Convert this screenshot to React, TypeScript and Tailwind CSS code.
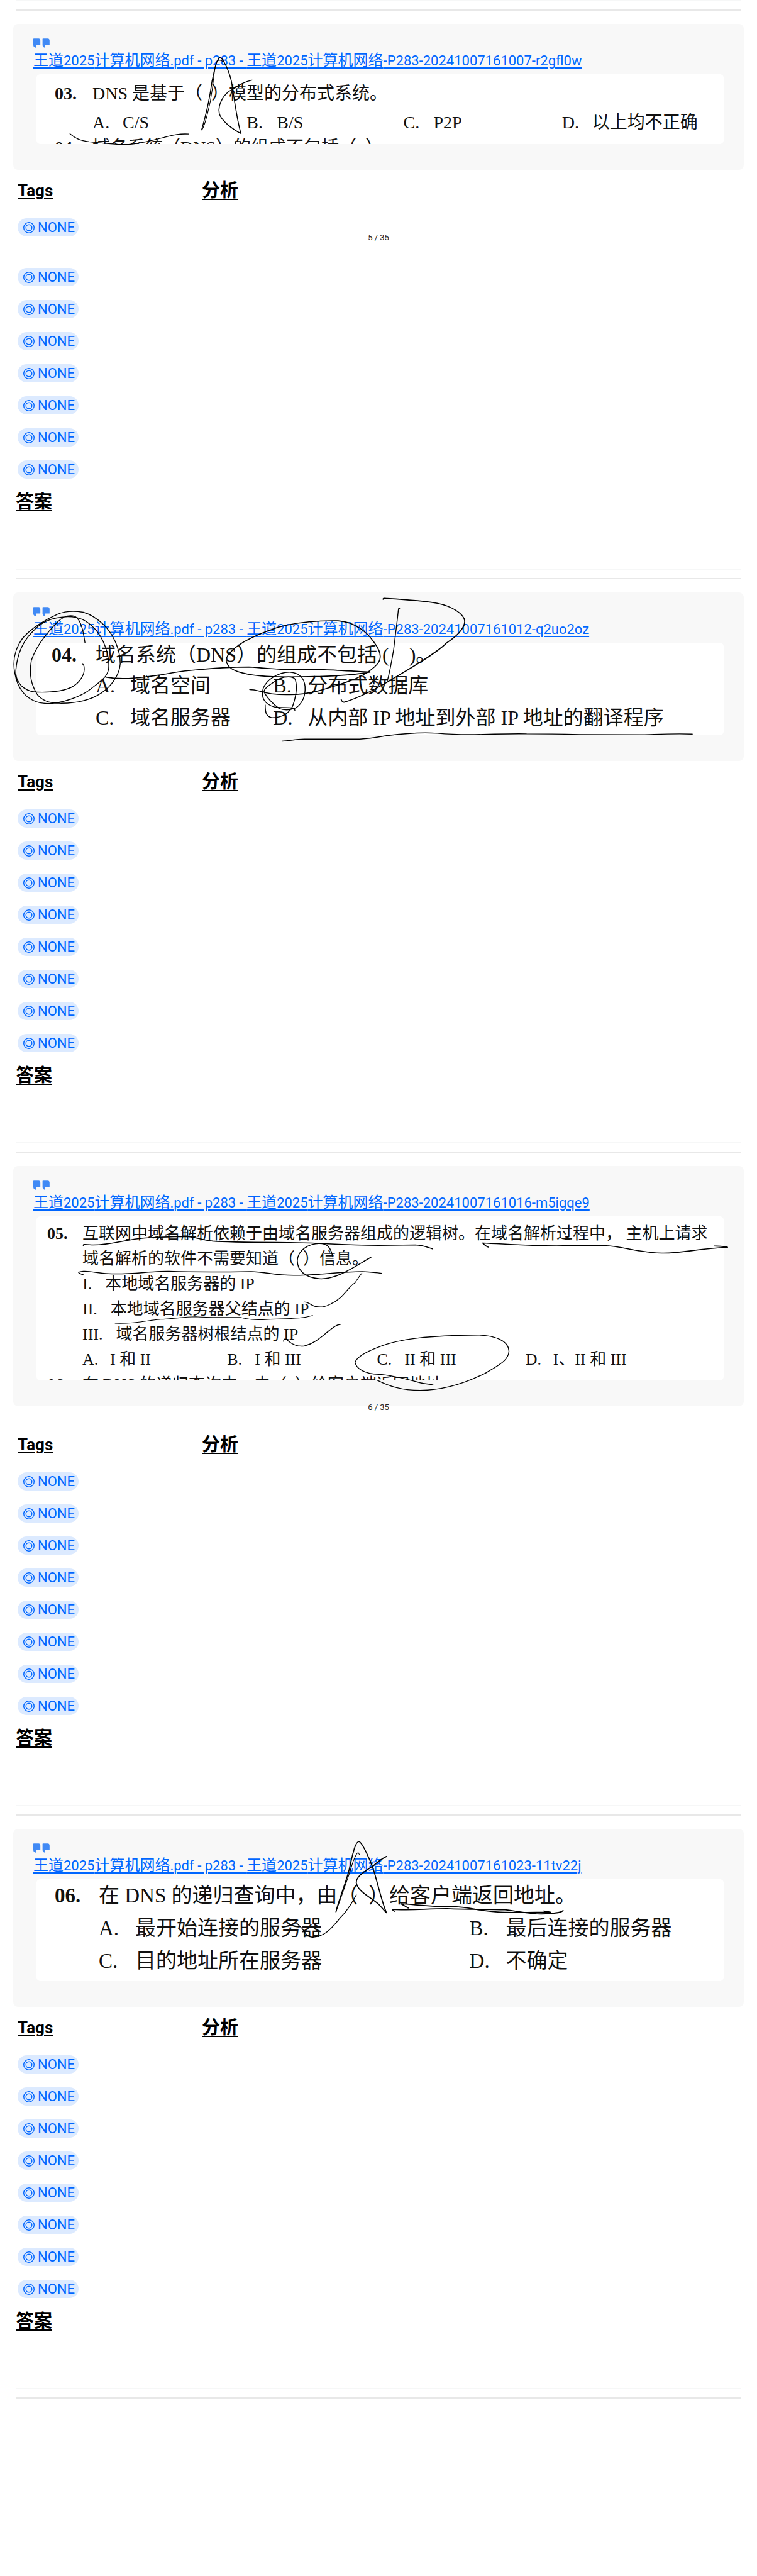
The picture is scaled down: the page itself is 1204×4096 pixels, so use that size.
import type { ReactNode } from "react";

const NB = "\u00a0";

function QuoteIcon() {
  return (
    <svg className="h-[15px] w-[26px] fill-[#418af5]" viewBox="0 0 142 80" aria-hidden="true">
      <path d="M4 0H46Q61 2 61 18V54Q61 57 58 57H22V80Q2 78 0 58V4Q0 0 4 0Z" />
      <path d="M84 0H126Q141 2 141 18V54Q141 57 138 57H102V80Q82 78 80 58V4Q80 0 84 0Z" />
    </svg>
  );
}

function TagPill() {
  return (
    <button
      type="button"
      className="flex h-[29px] w-fit items-center gap-[5px] rounded-full bg-[#dceaff] pr-[6px] pl-[9px] text-[22px] leading-[29px] text-[#0066ff]"
    >
      <svg className="size-[18px] shrink-0" viewBox="0 0 18 18" fill="none" stroke="currentColor" strokeWidth="1.4" aria-hidden="true">
        <circle cx="9" cy="9" r="8.3" />
        <circle cx="9" cy="9" r="4.8" />
      </svg>
      NONE
    </button>
  );
}

function PageMarker({ page }: { page: number }) {
  return <div className="relative h-7 text-center text-[13px] leading-[4px] text-[#222]">{page} / 35</div>;
}

function Ink({ viewBox, paths }: { viewBox: string; paths: [number, string][] }) {
  return (
    <svg
      className="pointer-events-none absolute inset-0 h-full w-full overflow-visible"
      viewBox={viewBox}
      preserveAspectRatio="none"
      fill="none"
      stroke="#000"
      strokeLinecap="round"
      strokeLinejoin="round"
      aria-hidden="true"
    >
      {paths.map(([w, d], i) => (
        <path key={i} d={d} strokeWidth={w} vectorEffect="non-scaling-stroke" />
      ))}
    </svg>
  );
}

function Link({ suffix }: { suffix: string }) {
  return (
    <a
      href="#"
      className="mt-[3px] block h-[34px] w-fit text-[22px] leading-[34px] whitespace-pre text-[#0066ff] underline decoration-2 underline-offset-[3px]"
    >
      <span className="text-[24px]">王道</span>2025<span className="text-[24px]">计算机网络</span>.pdf - p283 -{" "}
      <span className="text-[24px]">王道</span>2025<span className="text-[24px]">计算机网络</span>-P283-{suffix}
    </a>
  );
}

type SectionProps = {
  suffix: string;
  viewBox: string;
  ink: [number, string][];
  children: ReactNode;
  pageAfterCard?: number;
  pageAfterFirstTag?: number;
};

function Section({ suffix, viewBox, ink, children, pageAfterCard, pageAfterFirstTag }: SectionProps) {
  return (
    <section>
      <hr className="mx-[26px] border-t-2 border-[#e8e8e8]" />
      <div className="relative mx-[21px] mt-[21px] rounded-lg bg-[#f8f8f8] px-8 pt-[23px] pb-[41px]">
        <QuoteIcon />
        <Link suffix={suffix} />
        <div className="mt-[5px] ml-[5px] overflow-hidden rounded-md bg-white font-['Liberation_Serif','Noto_Sans_CJK_SC',serif] whitespace-nowrap text-[#111]">
          {children}
        </div>
        <Ink viewBox={viewBox} paths={ink} />
      </div>
      {pageAfterCard && <PageMarker page={pageAfterCard} />}
      <div className="grid grid-cols-[293px_1fr] px-7 pt-[13px] pb-6 leading-10 font-bold">
        <h2 className="text-[26px] underline decoration-2 underline-offset-[3px]">Tags</h2>
        <h2 className="text-[29px] underline decoration-2 underline-offset-[3px]">分析</h2>
      </div>
      <div className="flex flex-col">
        {Array.from({ length: 8 }, (_, i) => (
          <div key={i} className={i === 0 ? "" : "mt-[22px]"}>
            <div className="px-7">
              <TagPill />
            </div>
            {i === 0 && pageAfterFirstTag && <PageMarker page={pageAfterFirstTag} />}
          </div>
        ))}
      </div>
      <h2 className="mt-[17px] ml-[25px] h-10 text-[29px] leading-10 font-bold underline decoration-2 underline-offset-[3px]">答案</h2>
      <hr className="mx-[26px] mt-[86px] mb-[13px] border-t-2 border-[#f6f7f7]" />
    </section>
  );
}

function Option({ label, width, children }: { label: string; width: string; children: ReactNode }) {
  return (
    <div className="flex">
      <span className={`shrink-0 ${width}`}>{label}.</span>
      <span>{children}</span>
    </div>
  );
}

const ink3: [number, string][] = [
  [1.3, "M290 824C310 850 330 866 370 873C420 880 470 892 520 890C580 888 640 860 680 846C720 830 745 823 782 826"],
  [1.5, "M835 800C850 720 865 640 878 500C890 420 895 370 912 352C925 370 945 420 958 500C970 600 980 740 998 823C960 795 915 740 908 700C900 640 930 570 965 550C985 525 1010 505 1044 494"],
  [1.1, "M835 800C845 790 870 660 880 540C888 440 890 380 905 372C915 370 920 376 924 380"],
];

const ink4: [number, string][] = [
  [1.4, "M352 480C346 420 338 340 310 317C285 305 260 322 240 350C200 410 150 500 130 590C120 680 130 740 155 800C175 835 200 852 245 853C320 855 380 830 420 790C460 750 495 680 498 610C498 520 470 430 430 370C395 320 365 300 345 292C310 284 270 285 240 303C190 335 130 390 95 450C60 520 52 600 62 670C70 740 100 850 195 855C260 855 340 810 380 760C420 715 445 690 450 640C455 560 430 450 390 390C360 345 330 318 280 319C210 325 170 350 130 420C85 490 70 580 66 650C64 700 80 760 130 780C170 790 240 785 280 764C320 745 350 690 349 640C349 625 347 615 343 612"],
  [1.6, "M438 692C460 698 500 705 560 697C640 690 700 665 780 652C850 642 930 630 1030 630C1100 636 1150 645 1200 646C1330 641 1400 650 1532 661C1480 675 1400 686 1300 688C1220 691 1150 695 1080 684C1000 673 955 650 943 615C930 590 938 560 960 530C1000 470 1080 420 1150 385C1230 352 1320 343 1400 345C1470 352 1520 415 1550 480C1575 530 1580 570 1568 600C1550 640 1500 690 1440 720C1370 755 1290 800 1200 800C1140 802 1100 790 1080 780C1060 773 1050 769 1034 769"],
  [1.5, "M1098 864C1098 910 1102 935 1125 942C1170 943 1200 910 1212 870C1228 800 1230 740 1222 705C1212 685 1180 688 1160 700C1130 725 1095 760 1093 780C1100 810 1130 860 1155 885C1175 897 1200 897 1225 882C1255 850 1265 800 1263 750C1260 700 1240 665 1200 661C1150 660 1105 710 1090 760C1080 810 1090 860 1140 878C1170 882 1190 880 1205 881C1215 885 1218 890 1221 896"],
  [1.4, "M1655 272C1652 262 1650 266 1649 280C1643 370 1635 450 1630 520C1620 610 1610 680 1602 725"],
  [1.7, "M1586 212C1586 204 1590 207 1600 207C1680 214 1750 220 1810 237C1870 255 1920 300 1924 345C1924 390 1890 440 1850 480C1810 540 1720 620 1640 690C1580 745 1500 815 1424 847C1416 845 1414 838 1412 828"],
  [1.4, "M1168 1087C1200 1085 1220 1075 1260 1074C1340 1073 1420 1075 1490 1074C1540 1070 1570 1060 1600 1053C1680 1038 1760 1032 1810 1038C1870 1046 1920 1048 2000 1045C2080 1042 2140 1040 2180 1042C2260 1042 2340 1044 2400 1046L2660 1047C2720 1045 2780 1039 2866 1043"],
];

const ink5: [number, string][] = [
  [1.6, "M345 476C344 468 360 474 380 474C460 476 520 448 600 442C660 438 720 435 770 435C810 436 830 450 880 456C950 462 1100 462 1200 463C1330 464 1400 475 1568 476L1720 474C1750 475 1770 485 1790 492"],
  [1.6, "M2021 484C2010 480 2004 472 1998 465C2100 470 2200 480 2330 478L2500 477C2580 480 2640 510 2740 512C2820 514 2880 492 3012 485C3000 480 2980 480 2956 479"],
  [1.5, "M348 614C320 603 318 600 345 597C380 595 400 606 450 608C560 612 610 596 700 597C820 601 920 600 1040 598C1100 600 1140 616 1220 615C1330 615 1400 598 1500 598C1540 600 1560 602 1580 606"],
  [1.5, "M1378 530C1370 490 1360 470 1325 467C1270 470 1235 500 1231 545C1230 590 1260 628 1330 632C1400 630 1460 580 1536 531"],
  [1.3, "M1258 740C1275 735 1285 755 1305 760C1335 766 1350 760 1370 748C1420 725 1440 670 1470 650C1485 625 1490 615 1498 606"],
  [1.1, "M477 838C560 842 610 825 660 820C720 818 760 808 810 808C880 814 940 810 995 811C1030 820 1050 824 1110 820C1190 816 1250 818 1294 802"],
  [1.4, "M1175 924C1172 908 1182 908 1195 922C1215 940 1235 948 1260 944C1310 930 1340 890 1370 866C1390 848 1400 842 1408 845"],
  [1.4, "M1793 1125C1770 1120 1760 1120 1740 1115C1690 1100 1620 1078 1568 1076C1510 1074 1475 1050 1470 1020C1480 990 1530 965 1568 949C1650 910 1780 895 1980 893C2050 895 2105 920 2107 968C2105 1010 2070 1030 2010 1070C1930 1115 1840 1150 1740 1150C1660 1150 1610 1130 1560 1102"],
];

const ink6: [number, string][] = [
  [1.7, "M1391 618C1400 560 1430 460 1445 380C1460 290 1470 215 1487 215C1500 225 1530 310 1547 380C1565 460 1580 560 1600 623C1590 610 1578 590 1568 575C1530 530 1480 500 1475 450C1475 410 1520 380 1545 355C1565 330 1580 315 1600 301"],
  [1.1, "M1391 618C1410 540 1440 430 1455 360C1465 310 1478 280 1483 279L1488 290"],
  [1.4, "M1224 684C1222 670 1240 700 1250 712C1265 740 1272 765 1295 763C1350 760 1380 700 1410 650C1440 610 1460 560 1475 521"],
  [1.8, "M1690 596C1680 590 1672 580 1660 572C1720 575 1760 590 1880 588C1950 592 1990 615 2070 620C2150 624 2220 620 2278 620L2252 613"],
  [1.8, "M1635 615C1620 605 1625 603 1640 605C1720 610 1760 600 1850 600C1950 606 2020 602 2090 606C2150 615 2190 630 2240 630C2290 628 2320 625 2331 611"],
];

export default function App() {
  return (
    <main className="w-full bg-white pb-[270px] font-[Roboto,'Noto_Sans_CJK_SC',sans-serif] text-black">
      <hr className="mx-[26px] mb-[13px] border-t-2 border-[#f6f7f7]" />

      <Section suffix="20241007161007-r2gfl0w" viewBox="55 148 3024 898" ink={ink3} pageAfterFirstTag={5}>
        <div className="h-[111px] pt-2 pl-[29px] text-[28px] leading-[46px]">
          <div className="flex">
            <b className="w-[60px] shrink-0">03.</b>
            <p>DNS 是基于（{NB}{NB}）模型的分布式系统。</p>
          </div>
          <div className="grid grid-cols-[245fr_249fr_252fr_257fr] pl-[60px]">
            <Option label="A" width="w-12">C/S</Option>
            <Option label="B" width="w-12">B/S</Option>
            <Option label="C" width="w-12">P2P</Option>
            <Option label="D" width="w-12">以上均不正确</Option>
          </div>
          <div className="flex leading-[34px]">
            <b className="w-[60px] shrink-0">04.</b>
            <p>域名系统（DNS）的组成不包括（{NB}{NB}）。</p>
          </div>
        </div>
      </Section>

      <Section suffix="20241007161012-q2uo2oz" viewBox="55 170 3024 1039" ink={ink4}>
        <div className="h-[147px] pl-[24px] text-[32px] leading-[51px]">
          <div className="flex leading-[38px]">
            <b className="w-[70px] shrink-0">04.</b>
            <p>域名系统（DNS）的组成不包括{NB}({NB.repeat(4)})。</p>
          </div>
          <div className="mt-[5px] grid grid-cols-[282fr_716fr] pl-[70px]">
            <Option label="A" width="w-[55px]">域名空间</Option>
            <Option label="B" width="w-[55px]">分布式数据库</Option>
            <Option label="C" width="w-[55px]">域名服务器</Option>
            <Option label="D" width="w-[55px]">从内部 IP 地址到外部 IP 地址的翻译程序</Option>
          </div>
        </div>
      </Section>

      <Section suffix="20241007161016-m5igqe9" viewBox="55 107 3024 1117" ink={ink5} pageAfterCard={6}>
        <div className="h-[261px] pt-2 pl-[17px] text-[26px] leading-10">
          <div className="flex">
            <b className="w-[56px] shrink-0">05.</b>
            <div>
              <p>互联网中域名解析依赖于由域名服务器组成的逻辑树。在域名解析过程中，{NB}主机上请求</p>
              <p>域名解析的软件不需要知道（{NB}{NB}）信息。</p>
              <p className="flex gap-[21px]"><span>I.</span>本地域名服务器的 IP</p>
              <p className="flex gap-[21px]"><span>II.</span>本地域名服务器父结点的 IP</p>
              <p className="flex gap-[21px]"><span>III.</span>域名服务器树根结点的 IP</p>
            </div>
          </div>
          <div className="grid grid-cols-[230fr_238fr_236fr_315fr] pl-[56px]">
            <Option label="A" width="w-11">I 和 II</Option>
            <Option label="B" width="w-11">I 和 III</Option>
            <Option label="C" width="w-11">II 和 III</Option>
            <Option label="D" width="w-11">I、II 和 III</Option>
          </div>
          <div className="flex">
            <b className="w-[56px] shrink-0">06.</b>
            <p>在 DNS 的递归查询中，由（{NB}{NB}）给客户端返回地址。</p>
          </div>
        </div>
      </Section>

      <Section suffix="20241007161023-11tv22j" viewBox="55 143 3024 1019" ink={ink6}>
        <div className="h-[162px] pl-[29px] text-[33px] leading-[52px]">
          <div className="flex">
            <b className="w-[70px] shrink-0">06.</b>
            <p>在 DNS 的递归查询中，由（{NB}{NB}）给客户端返回地址。</p>
          </div>
          <div className="grid grid-cols-[589fr_404fr] pl-[70px]">
            <Option label="A" width="w-[58px]">最开始连接的服务器</Option>
            <Option label="B" width="w-[58px]">最后连接的服务器</Option>
            <Option label="C" width="w-[58px]">目的地址所在服务器</Option>
            <Option label="D" width="w-[58px]">不确定</Option>
          </div>
        </div>
      </Section>

      <hr className="mx-[26px] border-t-2 border-[#e8e8e8]" />
    </main>
  );
}
